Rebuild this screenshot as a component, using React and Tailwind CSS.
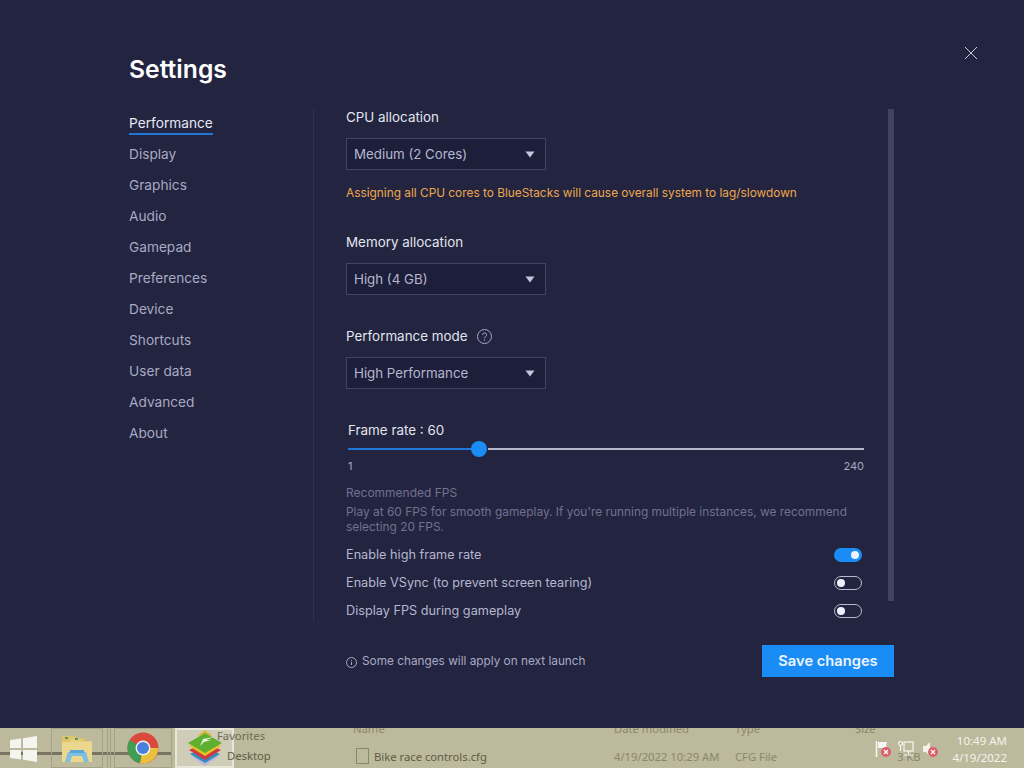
import React from "react";

const NAV = ["Performance", "Display", "Graphics", "Audio", "Gamepad", "Preferences", "Device", "Shortcuts", "User data", "Advanced", "About"];

function Select({ value }) {
  return (
    <div className="w-[200px] h-8 flex items-center justify-between pl-[7px] pr-[10px] border border-[#3f4463] bg-[#1d1e3a] text-[13.3px] text-[#b4b7cf]">
      <span className="pt-[2px]">{value}</span>
      <svg width="10" height="7" viewBox="0 0 10 7"><path d="M0.5 0.5h9L5 6.5z" fill="#c3c6dc" /></svg>
    </div>
  );
}

function Toggle({ on }) {
  return on ? (
    <div className="w-7 h-[14px] rounded-full bg-[#1a8cf5] flex items-center justify-end pr-[3px]">
      <div className="w-2 h-2 rounded-full bg-[#eef3ff]" />
    </div>
  ) : (
    <div className="w-7 h-[14px] rounded-full border border-[#b8bbd0] flex items-center pl-[2px]">
      <div className="w-2 h-2 rounded-full bg-[#eef0fb]" />
    </div>
  );
}

function ToggleRow({ label, on }) {
  return (
    <div className="h-7 flex items-center justify-between pr-[2px] text-[12.7px] text-[#b4b7cf]">
      <span>{label}</span>
      <Toggle on={on} />
    </div>
  );
}

function Label({ children }) {
  return <div className="text-[13.4px] leading-[18px] text-[#e2e4f0]">{children}</div>;
}

function Settings() {
  return (
    <div className="relative h-[728px] bg-[#23243f] pl-[129px] pt-[55px]">
      <svg className="absolute left-[964px] top-[46px]" width="14" height="14" viewBox="0 0 14 14">
        <path d="M1 1l12 12M13 1L1 13" stroke="#c5c8da" strokeWidth="1" fill="none" />
      </svg>
      <h1 className="text-[24.7px] leading-[29px] font-semibold text-white">Settings</h1>
      <div className="flex mt-[25px]">
        <nav className="w-[185px] h-[513px] flex flex-col border-r border-[#2f3150] text-[13.7px] text-[#a7aac4]">
          {NAV.map((n, i) => (
            <div key={n} className="h-[31px] flex items-start pt-[5px] leading-[18px]">
              <span className={i === 0 ? "text-[#e6e8f4] pb-px border-b-2 border-[#1f78d8]" : ""}>{n}</span>
            </div>
          ))}
        </nav>
        <div className="w-[548px] ml-[32px] flex -mt-px">
          <div className="w-[518px] flex flex-col">
            <Label>CPU allocation</Label>
            <div className="mt-3"><Select value="Medium (2 Cores)" /></div>
            <div className="mt-[14px] text-[11.85px] leading-[18px] text-[#eda74e]">Assigning all CPU cores to BlueStacks will cause overall system to lag/slowdown</div>
            <div className="mt-[31px]"><Label>Memory allocation</Label></div>
            <div className="mt-3"><Select value="High (4 GB)" /></div>
            <div className="mt-[32px] flex items-center gap-[9px]">
              <Label>Performance mode</Label>
              <svg width="15" height="15" viewBox="0 0 15 15">
                <circle cx="7.5" cy="7.5" r="7" stroke="#a7aac4" fill="none" />
                <path d="M5.6 5.9a2 2 0 1 1 3 1.7c-.7.4-1.1.8-1.1 1.6" stroke="#a7aac4" fill="none" />
                <circle cx="7.5" cy="11" r=".7" fill="#a7aac4" />
              </svg>
            </div>
            <div className="mt-3"><Select value="High Performance" /></div>
            <div className="mt-[32px] ml-[2px] text-[13.4px] leading-[18px] text-[#e2e4f0]">Frame rate : 60</div>
            <div className="ml-[2px] mt-[2px] relative h-4 w-[516px] flex items-center">
              <div className="w-[124px] h-0.5 bg-[#1f78d8]" />
              <div className="flex-1 ml-[16px] h-0.5 bg-[#b5b7cc]" />
              <div className="absolute left-[123px] top-0 w-4 h-4 rounded-full bg-[#1a8cf5]" />
            </div>
            <div className="ml-[2px] mt-[1px] w-[516px] flex justify-between text-[11px] leading-[16px] text-[#a7aac4]">
              <span>1</span><span>240</span>
            </div>
            <div className="mt-[11px] text-[12px] leading-[16px] text-[#6f7290]">Recommended FPS</div>
            <div className="mt-[3px] w-[516px] text-[11.9px] leading-[15px] text-[#6f7290]">Play at 60 FPS for smooth gameplay. If you're running multiple instances, we recommend selecting 20 FPS.</div>
            <div className="mt-[7px] flex flex-col">
              <ToggleRow label="Enable high frame rate" on />
              <ToggleRow label="Enable VSync (to prevent screen tearing)" />
              <ToggleRow label="Display FPS during gameplay" />
            </div>
          </div>
          <div className="w-[6px] h-[492px] ml-[24px] mt-px bg-[#41425e]" />
        </div>
      </div>
      <div className="absolute left-[346px] top-[645px] w-[548px] flex items-center justify-between">
        <div className="flex items-center gap-[5px] pt-[2px] text-[11.8px] text-[#a7aac4]">
          <svg width="11" height="11" viewBox="0 0 11 11">
            <circle cx="5.5" cy="5.5" r="5" stroke="#a7aac4" fill="none" />
            <path d="M5.5 5v3M5.5 3v1" stroke="#a7aac4" fill="none" />
          </svg>
          <span>Some changes will apply on next launch</span>
        </div>
        <div className="w-[132px] h-8 bg-[#1a8cf5] flex items-center justify-center pt-px text-[14.7px] font-semibold text-[#eaf4ff]">Save changes</div>
      </div>
    </div>
  );
}

function WinLogo() {
  return (
    <svg width="27" height="26" viewBox="0 0 27 26">
      <path d="M0 4l11-1.6V12H0zM13 2.2L27 0v12H13zM0 14h11v9.6L0 22zM13 14h14v12l-14-2.2z" fill="#f5f5f0" />
    </svg>
  );
}

function FolderIcon() {
  return (
    <svg width="32" height="32" viewBox="0 0 32 32">
      <path d="M1 4h12l2 2h9v8H1z" fill="#e2c468" />
      <path d="M9 7h10l2 2h10v12H9z" fill="#e7cd7c" />
      <path d="M1 10h30v20H1z" fill="#ecd78e" />
      <path d="M4 5h3v2H4zM14 6h3v2h-3z" fill="#4f9a62" />
      <path d="M7 20h18l3 10h-5l-2-6H11l-2 6H4z" fill="#7fbfe4" />
      <path d="M9 18h14v3H9z" fill="#5aa6d8" />
    </svg>
  );
}

function ChromeIcon() {
  return (
    <svg width="32" height="32" viewBox="0 0 32 32">
      <circle cx="16" cy="16" r="15.5" fill="#d94a3d" />
      <path d="M16 16L2.6 8A15.5 15.5 0 0 0 13 31.2z" fill="#3f9d54" />
      <path d="M16 16h15.3A15.5 15.5 0 0 1 13 31.2z" fill="#eac13d" />
      <circle cx="16" cy="16" r="7.5" fill="#f1f1ea" />
      <circle cx="16" cy="16" r="6" fill="#4a7fe0" />
    </svg>
  );
}

function BlueStacksIcon() {
  return (
    <svg width="34" height="36" viewBox="0 0 34 36">
      <path d="M17 0l7 5-7 4-7-4z" fill="#d9b948" />
      <path d="M4 27l13 9 13-9-13-6z" fill="#c3b6d8" />
      <path d="M2 24l15 9 15-9-15-7z" fill="#2f8fc4" />
      <path d="M1 20l16 10 16-10-16-7z" fill="#d23b3b" />
      <path d="M1 16l16 10 16-10-16-7z" fill="#e6c22d" />
      <path d="M0 13L17 3l17 10-17 10z" fill="#5fb030" />
      <path d="M12 16l3-7 11-2-8 3 5 0-7 2z" fill="#e8f3d8" />
    </svg>
  );
}

function XBadge({ className }) {
  return (
    <div className={"absolute w-[10px] h-[10px] rounded-full bg-[#d9606a] flex items-center justify-center " + className}>
      <svg width="6" height="6" viewBox="0 0 6 6"><path d="M1 1l4 4M5 1L1 5" stroke="#fff" strokeWidth="1.2" /></svg>
    </div>
  );
}

function Tray() {
  return (
    <div className="absolute left-[875px] top-[13px] flex items-start gap-[6px]">
      <div className="relative w-[17px] h-[16px]">
        <svg width="14" height="16" viewBox="0 0 14 16"><path d="M1.5 0v16" stroke="#f7f7f2" strokeWidth="1.6" /><path d="M3 1h9l-1 3 1 3H3z" fill="#f7f7f2" /></svg>
        <XBadge className="left-[6px] top-[6px]" />
      </div>
      <div className="w-[16px] h-[16px]">
        <svg width="16" height="16" viewBox="0 0 16 16" fill="none" stroke="#f7f7f2" strokeWidth="1.2"><rect x="6" y="1" width="9" height="9" /><circle cx="2.5" cy="2.5" r="2" /><path d="M2.5 4.5V10M10.5 10v3M6 14h9" /></svg>
      </div>
      <div className="relative w-[16px] h-[16px] ml-[2px]">
        <svg width="14" height="16" viewBox="0 0 14 16"><path d="M1 5h3l4-4v14l-4-4H1z" fill="#f3f2ea" /></svg>
        <XBadge className="left-[6px] top-[6px]" />
      </div>
    </div>
  );
}

function Taskbar() {
  const ghost = "absolute text-[11.25px] leading-[15px] whitespace-nowrap";
  return (
    <div className="relative h-10 bg-[#bdb99c] flex items-stretch overflow-hidden" style={{ fontFamily: '"Noto Sans", sans-serif' }}>
      <div className="absolute left-0 w-[172px] top-[24px] h-[3px] bg-[#77745f]" />
      <div className="relative w-[51px] flex items-center justify-start pl-[10px] pt-[2px]"><WinLogo /></div>
      <div className="relative w-[52px] border border-[#a5a28a] flex items-center justify-center"><FolderIcon /></div>
      <div className="relative w-[4px] ml-[4px] border-x border-[#a5a28a]" />
      <div className="relative w-[58px] ml-[3px] border border-[#a5a28a] flex items-center justify-center"><ChromeIcon /></div>
      <div className="relative w-[59px] ml-[3px] border-2 border-[#e8e6d8] bg-[#cfccb8] flex items-center justify-center"><BlueStacksIcon /></div>
      <span className={ghost + " left-[217px] top-[0px] text-[#6d6a54]"}>Favorites</span>
      <span className={ghost + " left-[227px] top-[20px] text-[#5f5c48]"}>Desktop</span>
      <span className={ghost + " left-[353px] top-[-7px] text-[#8a876f]"}>Name</span>
      <div className="absolute left-[356px] top-[20px] w-[13px] h-[16px] border border-[#8a876f]" />
      <span className={ghost + " left-[374px] top-[21px] text-[#5f5c48]"}>Bike race controls.cfg</span>
      <span className={ghost + " left-[614px] top-[-7px] text-[#8a876f]"}>Date modified</span>
      <span className={ghost + " left-[614px] top-[21px] text-[#8a876f]"}>4/19/2022 10:29 AM</span>
      <span className={ghost + " left-[735px] top-[-7px] text-[#8a876f]"}>Type</span>
      <span className={ghost + " left-[735px] top-[21px] text-[#8a876f]"}>CFG File</span>
      <span className={ghost + " left-[855px] top-[-7px] text-[#8a876f]"}>Size</span>
      <span className={ghost + " left-[897px] top-[21px] text-[#8a876f]"}>3 KB</span>
      <Tray />
      <div className="absolute right-[17px] top-[4px] flex flex-col items-end whitespace-nowrap text-[11.5px] leading-[17px] text-[#f4f3ec]">
        <span>10:49 AM</span>
        <span>4/19/2022</span>
      </div>
    </div>
  );
}

export default function App() {
  return (
    <div className="w-[1024px] h-[768px] overflow-hidden" style={{ fontFamily: 'Inter, "Liberation Sans", sans-serif' }}>
      <Settings />
      <Taskbar />
    </div>
  );
}
